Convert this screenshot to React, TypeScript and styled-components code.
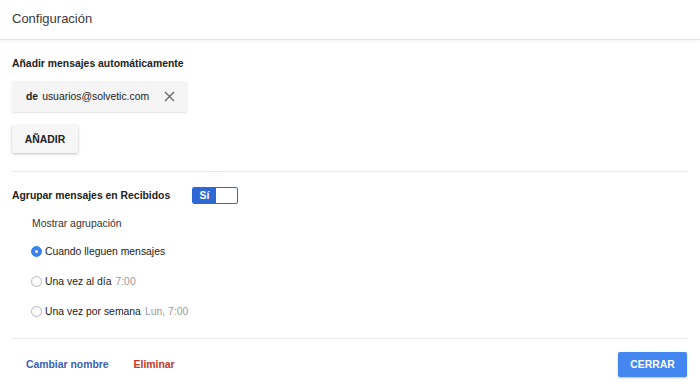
import React, { useState } from "react";
import styled, { createGlobalStyle } from "styled-components";

const Global = createGlobalStyle`
  html, body { margin: 0; padding: 0; background: #fff; }
  body { font-family: "Liberation Sans", Arial, Helvetica, sans-serif; color: #222; }
  * { box-sizing: border-box; }
`;

const FS = "10.4px";

const Page = styled.div`
  width: 700px;
  height: 385px;
  background: #fff;
  overflow: hidden;
`;

const Header = styled.header`
  height: 40px;
  display: flex;
  align-items: center;
  padding: 0 12px 2px;
  font-size: 13px;
  color: #3a3a3a;
  border-bottom: 1px solid #e6e6e6;
  box-shadow: 0 1px 4px rgba(0, 0, 0, 0.05);
`;

const Body = styled.div`
  padding: 0 12px;
`;

const Section = styled.section<{ $top: number }>`
  padding-top: ${(p) => p.$top}px;
  border-bottom: 1px solid #e8e8e8;
  display: flex;
  flex-direction: column;
  align-items: flex-start;
`;

const Label = styled.div`
  font-size: ${FS};
  line-height: 14px;
  font-weight: bold;
  color: #222;
`;

const Chip = styled.div`
  margin-top: 10px;
  width: 175px;
  height: 31px;
  background: #f5f5f5;
  box-shadow: 0 1px 2px rgba(0, 0, 0, 0.12);
  border-radius: 1px;
  display: flex;
  align-items: center;
  justify-content: space-between;
  padding: 0 12px 0 14px;
  font-size: ${FS};
  color: #222;
  b { margin-right: 4px; }
`;

const Close = styled.svg`
  width: 11px;
  height: 11px;
  stroke: #666;
  stroke-width: 1.3;
`;

const Button = styled.button`
  margin: 13px 0 18px;
  width: 66px;
  height: 28px;
  border: none;
  background: #f6f6f6;
  box-shadow: 0 1px 3px rgba(0, 0, 0, 0.25);
  border-radius: 2px;
  font-family: inherit;
  font-size: ${FS};
  font-weight: bold;
  color: #222;
  padding: 0;
`;

const ToggleRow = styled.div`
  display: flex;
  align-items: center;
  height: 17px;
`;

const ToggleLabel = styled(Label)`
  width: 180px;
`;

const Toggle = styled.div`
  width: 46px;
  height: 17px;
  border: 1px solid #2f67d4;
  border-radius: 2px;
  display: flex;
  overflow: hidden;
  background: #fff;
`;

const ToggleOn = styled.div`
  width: 23px;
  background: #2f67d4;
  color: #fff;
  font-size: ${FS};
  font-weight: bold;
  display: flex;
  align-items: center;
  justify-content: center;
`;

const SubLabel = styled.div`
  margin: 13px 0 5px 20px;
  font-size: ${FS};
  line-height: 14px;
  color: #333;
`;

const Options = styled.div`
  display: flex;
  flex-direction: column;
  margin: 0 0 12px 19px;
`;

const Option = styled.label`
  height: 30px;
  display: flex;
  align-items: center;
  font-size: ${FS};
  color: #222;
  cursor: pointer;
`;

const Radio = styled.span<{ $checked: boolean }>`
  width: 11px;
  height: 11px;
  border-radius: 50%;
  margin-right: 3px;
  background: ${(p) => (p.$checked ? "#3b82ef" : "#fff")};
  border: 1px solid ${(p) => (p.$checked ? "#3b82ef" : "#b5b5b5")};
  display: flex;
  align-items: center;
  justify-content: center;
  &::after {
    content: "";
    width: 3px;
    height: 3px;
    border-radius: 50%;
    background: ${(p) => (p.$checked ? "#fff" : "transparent")};
  }
`;

const Hint = styled.span`
  color: #9a9a9a;
  margin-left: 4px;
`;

const Footer = styled.footer`
  display: flex;
  align-items: center;
  height: 25px;
  margin-top: 13px;
  padding-left: 14px;
`;

const Link = styled.a<{ $danger?: boolean }>`
  font-size: ${FS};
  font-weight: bold;
  color: ${(p) => (p.$danger ? "#c7342b" : "#3a5fb3")};
  margin-right: 25px;
  text-decoration: none;
  cursor: pointer;
`;

const Primary = styled.button`
  margin-left: auto;
  margin-right: 1px;
  width: 69px;
  height: 25px;
  border: none;
  border-radius: 2px;
  background: #4487f0;
  box-shadow: 0 1px 2px rgba(0, 0, 0, 0.25);
  color: #fff;
  font-family: inherit;
  font-size: ${FS};
  font-weight: bold;
  padding: 0;
`;

const options = [
  { label: "Cuando lleguen mensajes" },
  { label: "Una vez al día", hint: "7:00" },
  { label: "Una vez por semana", hint: "Lun, 7:00" },
];

export default function App() {
  const [sel, setSel] = useState(0);
  return (
    <Page>
      <Global />
      <Header>Configuración</Header>
      <Body>
        <Section $top={17}>
          <Label>Añadir mensajes automáticamente</Label>
          <Chip>
            <span>
              <b>de</b>usuarios@solvetic.com
            </span>
            <Close viewBox="0 0 11 11" fill="none">
              <path d="M1 1L10 10M10 1L1 10" />
            </Close>
          </Chip>
          <Button>AÑADIR</Button>
        </Section>
        <Section $top={15}>
          <ToggleRow>
            <ToggleLabel>Agrupar mensajes en Recibidos</ToggleLabel>
            <Toggle>
              <ToggleOn>Sí</ToggleOn>
            </Toggle>
          </ToggleRow>
          <SubLabel>Mostrar agrupación</SubLabel>
          <Options>
            {options.map((o, i) => (
              <Option key={o.label} onClick={() => setSel(i)}>
                <Radio $checked={sel === i} />
                {o.label}
                {o.hint && <Hint>{o.hint}</Hint>}
              </Option>
            ))}
          </Options>
        </Section>
        <Footer>
          <Link>Cambiar nombre</Link>
          <Link $danger>Eliminar</Link>
          <Primary>CERRAR</Primary>
        </Footer>
      </Body>
    </Page>
  );
}
